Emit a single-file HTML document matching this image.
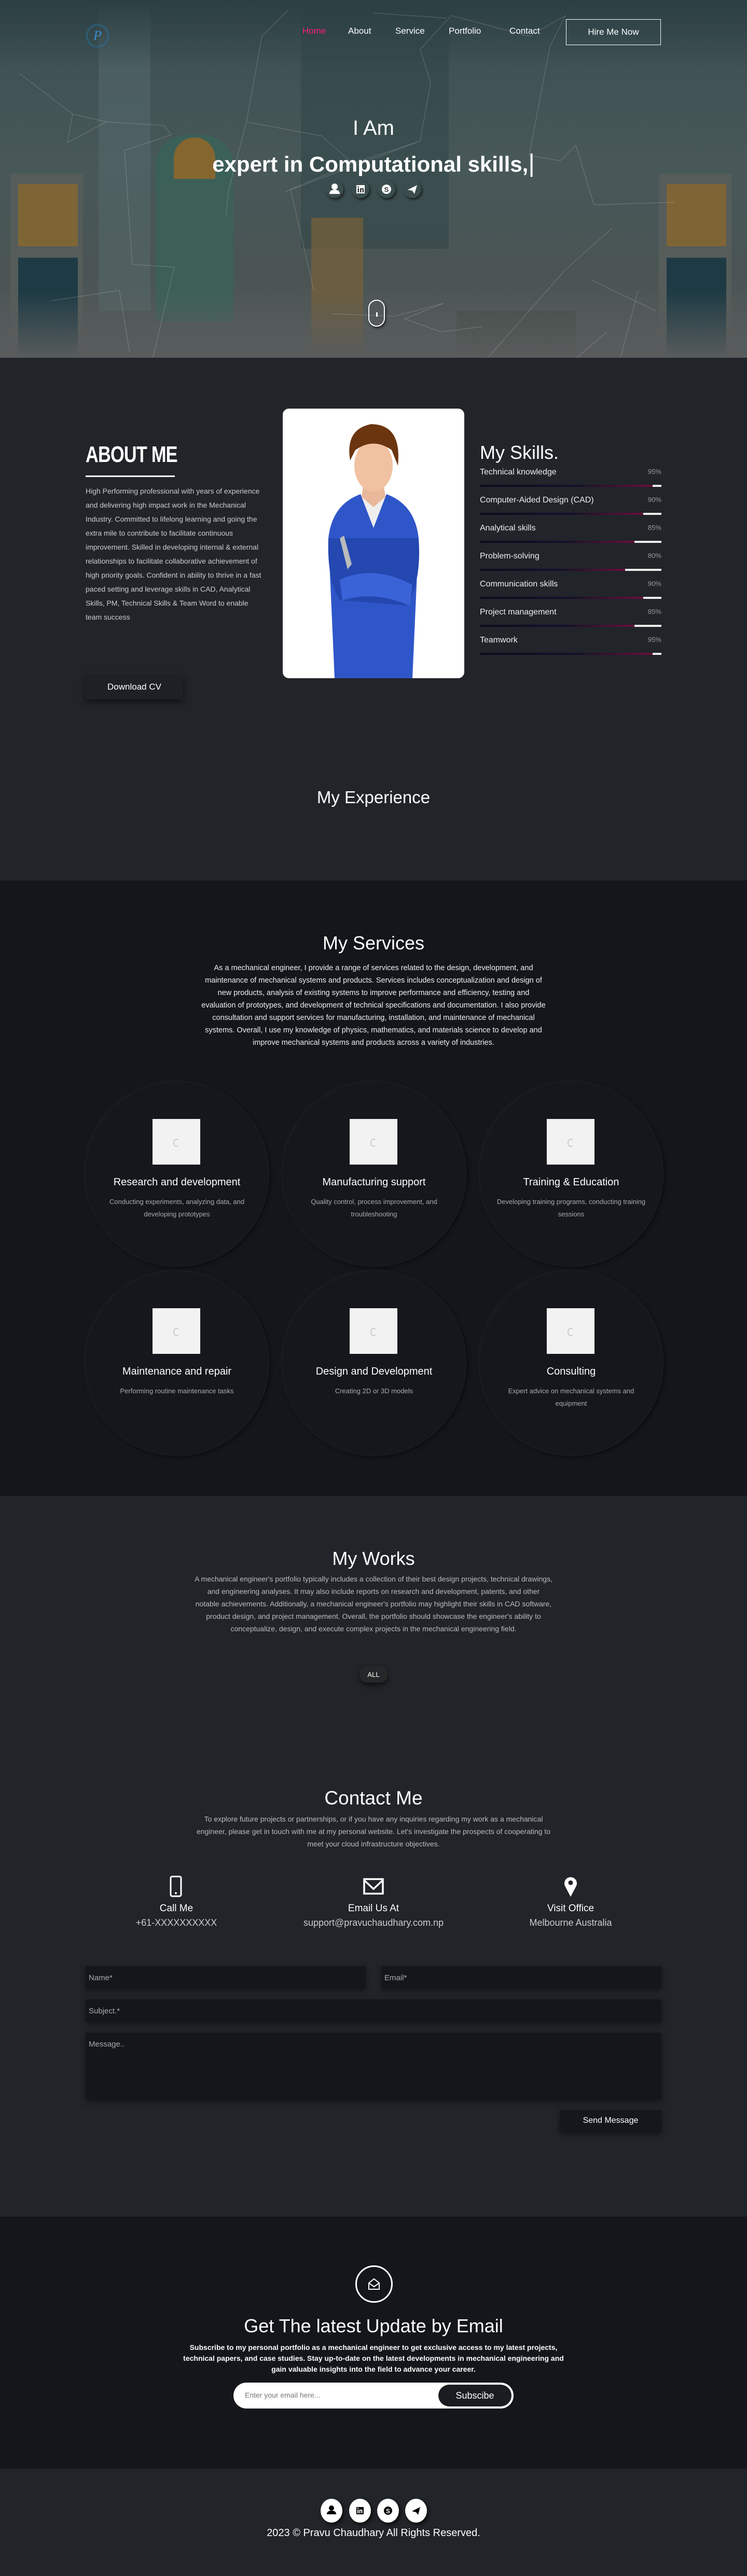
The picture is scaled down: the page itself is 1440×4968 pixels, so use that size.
<!DOCTYPE html>
<html><head><meta charset="utf-8"><style>
*{margin:0;padding:0;box-sizing:border-box}
body{width:1440px;height:4968px;background:#212429;font-family:"Liberation Sans",sans-serif;color:#fff;position:relative;overflow:hidden}
.a{position:absolute}
.c{text-align:center}
.hero{left:0;top:0;width:1440px;height:690px;background:linear-gradient(180deg,#3a4d50 0%,#485859 45%,#4a5454 75%,#555a5a 100%);overflow:hidden}
.nav{font-size:17px;top:50px}
.bar{left:925px;width:350px;height:4px;background:#eee}
.bar i{display:block;height:4px;background:linear-gradient(90deg,#0d0b22,#14102a 55%,#6a0f3a)}
.sk{left:925px;width:350px;font-size:16px;color:#eee}
.sk span{float:right;color:#999;font-size:13px}
.circ{width:356px;height:358px;border-radius:50%;background:#15171c;box-shadow:-2px -2px 6px rgba(255,255,255,.03),3px 3px 8px rgba(0,0,0,.45);border:1px solid #1e2127}
.circ .ph{position:absolute;left:130px;top:72px;width:92px;height:88px;background:#f2f2f2}
.circ .ph:after{content:"";position:absolute;left:40px;top:38px;width:8px;height:12px;border:2px solid #ccc;border-right-color:transparent;border-radius:50%}
.circ h3{position:absolute;left:0;right:0;top:183px;font-size:20px;font-weight:normal;text-align:center}
.circ p{position:absolute;left:30px;right:30px;top:220px;font-size:13px;line-height:24px;color:#aaa;text-align:center}
.inp{background:#14161b;box-shadow:0 4px 12px rgba(0,0,0,.45);color:#aaa;font-size:15px;padding:14px 6px}
.soc{width:34px;height:34px;border-radius:50%;box-shadow:2px 3px 5px rgba(0,0,0,.6)}
.fs{width:42px;height:46px;border-radius:50%;background:#fff;box-shadow:3px 4px 8px rgba(0,0,0,.7)}
</style></head><body>

<!-- HERO -->
<div class="a hero">
  <div class="a" style="left:190px;top:0;width:100px;height:600px;background:#55696b;opacity:.5"></div>
  <div class="a" style="left:580px;top:0;width:285px;height:480px;background:#2e4446;opacity:.5"></div>
  <div class="a" style="left:0;top:0;width:1440px;height:130px;background:linear-gradient(180deg,#2c3f42,rgba(44,63,66,0))"></div>
  <div class="a" style="left:20px;top:335px;width:140px;height:800px;background:#555c5a"></div>
  <div class="a" style="left:35px;top:355px;width:115px;height:120px;background:#7e6536"></div>
  <div class="a" style="left:35px;top:497px;width:115px;height:210px;background:#1e3a44"></div>
  <div class="a" style="left:1270px;top:335px;width:140px;height:800px;background:#555c5a"></div>
  <div class="a" style="left:1285px;top:355px;width:115px;height:120px;background:#7e6536"></div>
  <div class="a" style="left:1285px;top:497px;width:115px;height:210px;background:#1e3a44"></div>
  <div class="a" style="left:300px;top:260px;width:150px;height:360px;background:#3a6158;border-radius:60px 60px 10px 10px;opacity:.85"></div>
  <div class="a" style="left:335px;top:265px;width:80px;height:80px;background:#86662f;border-radius:40px 40px 0 0"></div>
  <div class="a" style="left:600px;top:420px;width:100px;height:470px;background:#76603a;opacity:.75"></div>
  <div class="a" style="left:880px;top:600px;width:230px;height:500px;background:#474e4c"></div>
  <div class="a" style="left:610px;top:905px;width:300px;height:70px;background:#3c4647"></div>
  <div class="a" style="left:0;top:560px;width:1440px;height:130px;background:linear-gradient(180deg,rgba(80,88,88,0),#585c5c)"></div>
  <svg class="a" style="left:0;top:0" width="1440" height="690" stroke="rgba(255,255,255,.22)" stroke-width="1" fill="none">
    <path d="M38 142 L140 220 L205 235 L316 242 L330 260 L240 290 L255 510 L336 515 L278 760 L322 770 M140 220 L130 275 L205 235 M555 20 L505 70 L475 235 L440 370 L436 415 M475 235 L620 262 L680 315 L810 272 L830 160 L810 95 L870 30 L1020 70 L1090 30 L1060 90 L1020 300 L1080 310 L1110 280 L1145 395 L1300 390 M680 315 L560 365 L605 560 M810 272 L550 370 M1180 440 L1090 520 L905 730 L960 700 L1100 700 L1170 640 M720 25 L860 35"/>
    <path d="M640 605 L760 610 L855 585 L780 615 L850 640 L930 630"/>
    <path d="M100 580 L230 560 L250 680 M1140 540 L1265 600 M1195 695 L1230 560"/>
  </svg>
  <div class="a" style="left:168px;top:48px;width:40px;height:42px;border-radius:50%;border:1px solid #2a6f9a;box-shadow:0 0 6px #2a6f9a;color:#3a8ccc;font-family:'Liberation Serif',serif;font-style:italic;font-size:26px;text-align:center;line-height:40px">P</div>
  <div class="a nav" style="left:583px;color:#ff1c7c">Home</div>
  <div class="a nav" style="left:671px">About</div>
  <div class="a nav" style="left:762px">Service</div>
  <div class="a nav" style="left:865px">Portfolio</div>
  <div class="a nav" style="left:982px">Contact</div>
  <div class="a" style="left:1091px;top:37px;width:183px;height:50px;border:1px solid #fff;font-size:17px;text-align:center;line-height:48px">Hire Me Now</div>
  <div class="a c" style="left:0;width:1440px;top:225px;font-size:40px;font-weight:300">I Am</div>
  <div class="a c" style="left:0;width:1440px;top:288px;font-size:42px;font-weight:bold">expert in Computational skills,<span style="font-weight:normal;font-size:48px">|</span></div>
  <div class="a soc" style="left:628px;top:348px"><svg width="34" height="34"><circle cx="17" cy="12" r="6" fill="#fff"/><path d="M7 26 Q7 18 17 18 Q27 18 27 26 Z" fill="#fff"/></svg></div>
  <div class="a soc" style="left:678px;top:348px"><svg width="34" height="34"><rect x="9" y="9" width="16" height="16" fill="#fff"/><rect x="11.5" y="15" width="2.5" height="8" fill="#333"/><circle cx="12.7" cy="12.5" r="1.4" fill="#333"/><path d="M16 15h2.3v1.3c.6-1 1.5-1.4 2.6-1.4 2 0 2.3 1.4 2.3 3V23h-2.5v-4.5c0-1-.2-1.6-1-1.6s-1.2.6-1.2 1.6V23H16z" fill="#333"/></svg></div>
  <div class="a soc" style="left:728px;top:348px"><svg width="34" height="34"><circle cx="17" cy="17" r="9" fill="#fff"/><text x="17" y="22" font-size="13" font-weight="bold" text-anchor="middle" fill="#333" font-family="Liberation Sans">S</text></svg></div>
  <div class="a soc" style="left:778px;top:348px"><svg width="34" height="34"><path d="M8 18 L26 9 L21 26 L17 20 Z" fill="#fff"/></svg></div>
  <div class="a" style="left:710px;top:578px;width:32px;height:52px;border:2px solid #fff;border-radius:16px;box-shadow:2px 3px 5px rgba(0,0,0,.6)"><div class="a" style="left:13px;top:22px;width:3px;height:9px;background:#fff;border-radius:2px"></div></div>
</div>

<!-- ABOUT -->
<div class="a" style="left:165px;top:852px;font-size:44px;font-weight:bold;transform:scaleX(.78);transform-origin:left;letter-spacing:-1px">ABOUT ME</div>
<div class="a" style="left:165px;top:917px;width:172px;height:3px;background:#fff"></div>
<div class="a" style="left:165px;top:934px;width:340px;font-size:14px;line-height:27px;color:#ccc">High Performing professional with years of experience and delivering high impact work in the Mechanical Industry. Committed to lifelong learning and going the extra mile to contribute to facilitate continuous improvement. Skilled in developing internal &amp; external relationships to facilitate collaborative achievement of high priority goals. Confident in ability to thrive in a fast paced setting and leverage skills in CAD, Analytical Skills, PM, Technical Skills &amp; Team Word to enable team success</div>
<div class="a" style="left:165px;top:1301px;width:188px;height:48px;background:#1e2025;box-shadow:0 4px 12px rgba(0,0,0,.6),-2px -4px 10px rgba(255,255,255,.03);font-size:17px;text-align:center;line-height:48px">Download CV</div>
<div class="a" style="left:545px;top:788px;width:350px;height:520px;background:#fff;border-radius:12px;overflow:hidden">
  <svg width="350" height="520">
    <path d="M100 520 L88 250 Q95 185 150 165 L200 165 Q255 185 262 250 L250 520 Z" fill="#2f56c9"/>
    <path d="M88 250 Q85 330 110 370 L240 380 Q268 330 262 250" fill="#2448b0"/>
    <path d="M110 330 Q175 300 250 340 L245 380 Q175 350 115 370 Z" fill="#3a63d8"/>
    <path d="M150 165 L175 230 L200 165 Z" fill="#eee"/>
    <path d="M155 150 L195 150 L198 170 L175 190 L152 170 Z" fill="#e9b89a"/>
    <ellipse cx="175" cy="110" rx="37" ry="50" fill="#f0c2a2"/>
    <path d="M130 100 Q120 40 170 30 Q230 30 222 110 L210 80 Q175 55 140 80 Z" fill="#6b3510"/>
    <path d="M110 250 L125 310 L133 300 L118 245 Z" fill="#bbb"/>
  </svg>
</div>
<div class="a" style="left:925px;top:852px;font-size:36px">My Skills.</div>
<div class="a sk" style="top:902px">Technical knowledge<span>95%</span></div><div class="a bar" style="top:935px"><i style="width:95%"></i></div>
<div class="a sk" style="top:956px">Computer-Aided Design (CAD)<span>90%</span></div><div class="a bar" style="top:989px"><i style="width:90%"></i></div>
<div class="a sk" style="top:1010px">Analytical skills<span>85%</span></div><div class="a bar" style="top:1043px"><i style="width:85%"></i></div>
<div class="a sk" style="top:1064px">Problem-solving<span>80%</span></div><div class="a bar" style="top:1097px"><i style="width:80%"></i></div>
<div class="a sk" style="top:1118px">Communication skills<span>90%</span></div><div class="a bar" style="top:1151px"><i style="width:90%"></i></div>
<div class="a sk" style="top:1172px">Project management<span>85%</span></div><div class="a bar" style="top:1205px"><i style="width:85%"></i></div>
<div class="a sk" style="top:1226px">Teamwork<span>95%</span></div><div class="a bar" style="top:1259px"><i style="width:95%"></i></div>

<div class="a c" style="left:0;width:1440px;top:1519px;font-size:33px">My Experience</div>

<!-- SERVICES -->
<div class="a" style="left:0;top:1698px;width:1440px;height:1187px;background:#14161b"></div>
<div class="a c" style="left:0;width:1440px;top:1798px;font-size:36px">My Services</div>
<div class="a c" style="left:385px;width:670px;top:1855px;font-size:14.5px;line-height:24px;color:#eee">As a mechanical engineer, I provide a range of services related to the design, development, and maintenance of mechanical systems and products. Services includes conceptualization and design of new products, analysis of existing systems to improve performance and efficiency, testing and evaluation of prototypes, and development of technical specifications and documentation. I also provide consultation and support services for manufacturing, installation, and maintenance of mechanical systems. Overall, I use my knowledge of physics, mathematics, and materials science to develop and improve mechanical systems and products across a variety of industries.</div>
<div class="a circ" style="left:163px;top:2085px"><div class="ph"></div><h3>Research and development</h3><p>Conducting experiments, analyzing data, and developing prototypes</p></div>
<div class="a circ" style="left:543px;top:2085px"><div class="ph"></div><h3>Manufacturing support</h3><p>Quality control, process improvement, and troubleshooting</p></div>
<div class="a circ" style="left:923px;top:2085px"><div class="ph"></div><h3>Training &amp; Education</h3><p>Developing training programs, conducting training sessions</p></div>
<div class="a circ" style="left:163px;top:2450px"><div class="ph"></div><h3>Maintenance and repair</h3><p>Performing routine maintenance tasks</p></div>
<div class="a circ" style="left:543px;top:2450px"><div class="ph"></div><h3>Design and Development</h3><p>Creating 2D or 3D models</p></div>
<div class="a circ" style="left:923px;top:2450px"><div class="ph"></div><h3>Consulting</h3><p>Expert advice on mechanical systems and equipment</p></div>

<!-- WORKS -->
<div class="a c" style="left:0;width:1440px;top:2985px;font-size:36px">My Works</div>
<div class="a c" style="left:375px;width:690px;top:3033px;font-size:14px;line-height:24px;color:#bbb">A mechanical engineer's portfolio typically includes a collection of their best design projects, technical drawings, and engineering analyses. It may also include reports on research and development, patents, and other notable achievements. Additionally, a mechanical engineer's portfolio may highlight their skills in CAD software, product design, and project management. Overall, the portfolio should showcase the engineer's ability to conceptualize, design, and execute complex projects in the mechanical engineering field.</div>
<div class="a" style="left:693px;top:3214px;width:54px;height:31px;background:#262728;border-radius:14px;box-shadow:0 5px 10px rgba(0,0,0,.6);font-size:13px;text-align:center;line-height:31px">ALL</div>

<!-- CONTACT -->
<div class="a c" style="left:0;width:1440px;top:3447px;font-size:37px">Contact Me</div>
<div class="a c" style="left:375px;width:690px;top:3496px;font-size:14px;line-height:24px;color:#bbb">To explore future projects or partnerships, or if you have any inquiries regarding my work as a mechanical engineer, please get in touch with me at my personal website. Let's investigate the prospects of cooperating to meet your cloud infrastructure objectives.</div>
<svg class="a" style="left:327px;top:3617px" width="26" height="42"><rect x="2" y="2" width="20" height="38" rx="3" fill="none" stroke="#fff" stroke-width="3"/><circle cx="12" cy="34" r="2" fill="#fff"/></svg>
<svg class="a" style="left:700px;top:3622px" width="40" height="32"><rect x="2" y="2" width="36" height="28" fill="none" stroke="#fff" stroke-width="3.5"/><path d="M3 5 L20 21 L37 5" fill="none" stroke="#fff" stroke-width="3.5"/></svg>
<svg class="a" style="left:1086px;top:3617px" width="28" height="42"><path d="M14 41 L3 20 A12 12 0 1 1 25 20 Z" fill="#fff"/><circle cx="14" cy="14" r="4.5" fill="#212429"/></svg>
<div class="a c" style="left:190px;width:300px;top:3670px;font-size:19px">Call Me</div>
<div class="a c" style="left:190px;width:300px;top:3698px;font-size:18px;color:#ccc">+61-XXXXXXXXXX</div>
<div class="a c" style="left:570px;width:300px;top:3670px;font-size:19px">Email Us At</div>
<div class="a c" style="left:520px;width:400px;top:3698px;font-size:18px;color:#ccc">support@pravuchaudhary.com.np</div>
<div class="a c" style="left:950px;width:300px;top:3670px;font-size:19px">Visit Office</div>
<div class="a c" style="left:950px;width:300px;top:3698px;font-size:18px;color:#ccc">Melbourne Australia</div>

<div class="a inp" style="left:165px;top:3792px;width:540px;height:43px">Name*</div>
<div class="a inp" style="left:735px;top:3792px;width:540px;height:43px">Email*</div>
<div class="a inp" style="left:165px;top:3856px;width:1110px;height:43px">Subject.*</div>
<div class="a inp" style="left:165px;top:3920px;width:1110px;height:129px">Message..</div>
<div class="a" style="left:1079px;top:4069px;width:196px;height:41px;background:#15171c;box-shadow:0 5px 10px rgba(0,0,0,.5);font-size:16px;text-align:center;line-height:41px">Send Message</div>

<!-- NEWSLETTER -->
<div class="a" style="left:0;top:4275px;width:1440px;height:486px;background:#14161b"></div>
<div class="a" style="left:685px;top:4369px;width:72px;height:72px;border:3px solid #fff;border-radius:50%"></div>
<svg class="a" style="left:707px;top:4391px" width="28" height="28"><path d="M4 12 L14 4 L24 12 L24 24 L4 24 Z M4 12 L14 19 L24 12" fill="none" stroke="#fff" stroke-width="2"/></svg>
<div class="a c" style="left:0;width:1440px;top:4465px;font-size:36px">Get The latest Update by Email</div>
<div class="a c" style="left:350px;width:740px;top:4517px;font-size:14px;line-height:21px;font-weight:bold">Subscribe to my personal portfolio as a mechanical engineer to get exclusive access to my latest projects, technical papers, and case studies. Stay up-to-date on the latest developments in mechanical engineering and gain valuable insights into the field to advance your career.</div>
<div class="a" style="left:450px;top:4595px;width:540px;height:50px;background:#fff;border-radius:25px"></div>
<div class="a" style="left:472px;top:4611px;font-size:14px;color:#777">Enter your email here...</div>
<div class="a" style="left:845px;top:4599px;width:141px;height:42px;background:#1a1c22;border-radius:21px;font-size:18px;text-align:center;line-height:42px">Subscibe</div>

<!-- FOOTER -->
<div class="a fs" style="left:618px;top:4819px"><svg width="42" height="46"><circle cx="21" cy="18" r="5" fill="#000"/><path d="M12 30 Q12 23 21 23 Q30 23 30 30 Z" fill="#000"/></svg></div>
<div class="a fs" style="left:673px;top:4819px"><svg width="42" height="46"><rect x="14" y="16" width="14" height="14" fill="#000"/><rect x="16" y="21" width="2" height="7" fill="#fff"/><circle cx="17" cy="18.5" r="1.2" fill="#fff"/><path d="M19.5 21h2v1c.5-.8 1.2-1.1 2-1.1 1.7 0 2 1.1 2 2.6V28h-2v-4c0-.8-.2-1.3-.9-1.300s-1.100.5-1.100 1.300v4h-2z" fill="#fff"/></svg></div>
<div class="a fs" style="left:727px;top:4819px"><svg width="42" height="46"><circle cx="21" cy="23" r="8" fill="#000"/><text x="21" y="28" font-size="12" font-weight="bold" text-anchor="middle" fill="#fff" font-family="Liberation Sans">S</text></svg></div>
<div class="a fs" style="left:781px;top:4819px"><svg width="42" height="46"><path d="M13 24 L29 16 L25 31 L21 26 Z" fill="#000"/></svg></div>
<div class="a c" style="left:0;width:1440px;top:4874px;font-size:20px">2023 © Pravu Chaudhary All Rights Reserved.</div>
</body></html>
